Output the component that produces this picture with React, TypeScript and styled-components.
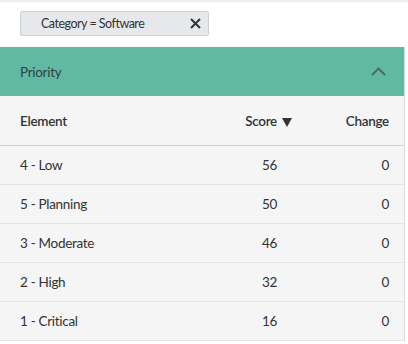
import React from 'react';
import styled, { createGlobalStyle } from 'styled-components';

const GlobalStyle = createGlobalStyle`
  body {
    margin: 0;
    background: #fff;
    font-family: 'Lato', 'Open Sans', sans-serif;
    color: #333;
  }
`;

const Page = styled.div`
  width: 408px;
  border-top: 2px solid #eceef1;
`;

const FilterBar = styled.div`
  padding: 9px 0 11px 20px;
`;

const Chip = styled.div`
  width: 189px;
  height: 25px;
  box-sizing: border-box;
  display: flex;
  align-items: center;
  justify-content: space-between;
  padding: 0 7px 0 20px;
  background: #e6e8eb;
  border: 1px solid #cdd1d5;
  border-radius: 2px;
  font-size: 12.5px;
  letter-spacing: -0.5px;
  color: #333;
`;

const Panel = styled.div`
  width: 404px;
  border-right: 1px solid #dcdcdc;
  background: #f5f5f5;
`;

const Header = styled.div`
  height: 49px;
  display: flex;
  align-items: center;
  justify-content: space-between;
  padding: 0 18px 0 20px;
  background: #5fb9a3;
  font-size: 13.5px;
  letter-spacing: -0.3px;
  color: #33413d;
`;

const Row = styled.div<{ $head?: boolean }>`
  display: grid;
  grid-template-columns: 1fr 120px 112px;
  align-items: center;
  height: ${p => (p.$head ? 49 : 38)}px;
  padding: 0 15px 0 20px;
  border-bottom: 1px solid ${p => (p.$head ? '#cfcfcf' : '#e4e4e4')};
  font-size: 13.5px;
  letter-spacing: -0.3px;
  font-weight: ${p => (p.$head ? 600 : 400)};
  color: #333;
`;

const Num = styled.div`
  text-align: right;
`;

const Arrow = styled.svg`
  margin-left: 5px;
  margin-right: -15px;
  vertical-align: -1px;
`;

const rows = [
  ['4 - Low', 56, 0],
  ['5 - Planning', 50, 0],
  ['3 - Moderate', 46, 0],
  ['2 - High', 32, 0],
  ['1 - Critical', 16, 0],
];

const App: React.FC = () => (
  <>
    <GlobalStyle />
    <Page>
      <FilterBar>
        <Chip>
          <span>Category = Software</span>
          <svg width="11" height="11" viewBox="0 0 11 11">
            <path d="M1 1L10 10M10 1L1 10" stroke="#333" strokeWidth="2" />
          </svg>
        </Chip>
      </FilterBar>
      <Panel>
        <Header>
          <span>Priority</span>
          <svg width="15" height="9" viewBox="0 0 15 9">
            <path d="M1 8L7.5 1.5L14 8" stroke="#56635f" strokeWidth="1.8" fill="none" />
          </svg>
        </Header>
        <Row $head>
          <div>Element</div>
          <Num>
            Score
            <Arrow width="10" height="9" viewBox="0 0 10 9">
              <path d="M0 0H10L5 9Z" fill="#333" />
            </Arrow>
          </Num>
          <Num>Change</Num>
        </Row>
        {rows.map(([name, score, change]) => (
          <Row key={name}>
            <div>{name}</div>
            <Num>{score}</Num>
            <Num>{change}</Num>
          </Row>
        ))}
      </Panel>
    </Page>
  </>
);

export default App;
